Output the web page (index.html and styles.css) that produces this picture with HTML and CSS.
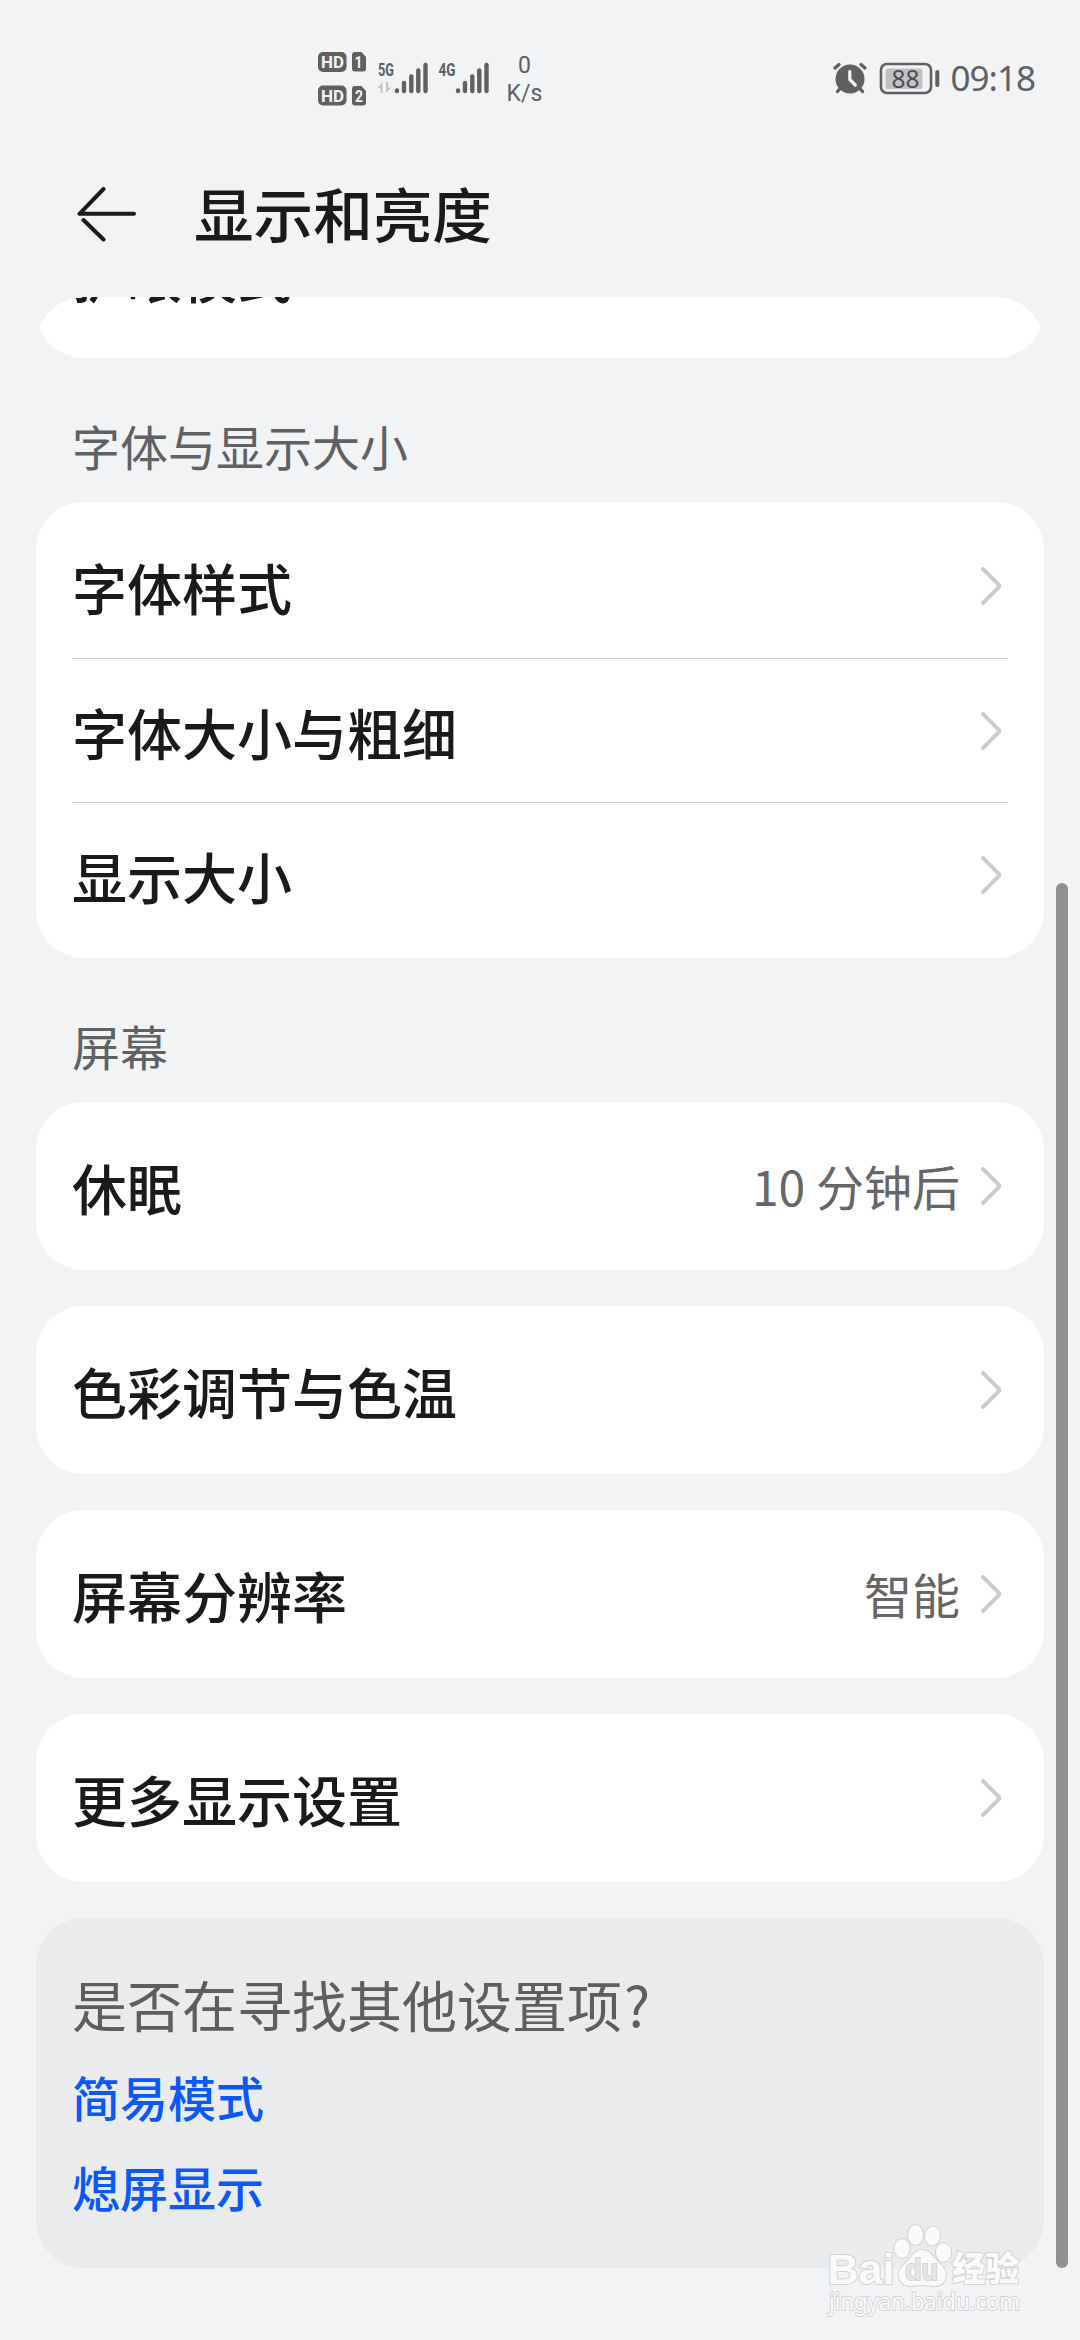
FILE: index.html
```html
<!DOCTYPE html>
<html lang="zh-CN">
<head>
  <meta charset="UTF-8">
  <meta name="viewport" content="width=device-width, initial-scale=1.0">
  <title>显示和亮度</title>
  <link rel="stylesheet" href="styles.css">
</head>
<body>
  <svg class="defs" width="0" height="0">
    <symbol id="arrow" viewBox="0 0 20 38">
      <path d="M2 2L17 17Q19 19 17 21L2 36" fill="none" stroke="#ccc" stroke-width="4" stroke-linecap="round"/>
    </symbol>
  </svg>

  <!-- Строка состояния -->
  <div class="status-bar">
    <svg class="sim-info" width="230" height="60" viewBox="315 48 230 60">
      <g class="badge">
        <rect x="318" y="52" width="28.5" height="20" rx="5"/>
        <rect x="318" y="85.500" width="28.500" height="20" rx="5"/>
        <path d="M355 52h6.500l4.500 5v11.500q0 3-3 3h-8q-3 0-3-3v-13.500q0-3 3-3z"/>
        <path d="M355 86h6.500l4.500 5v11.500q0 3-3 3h-8q-3 0-3-3v-13.500q0-3 3-3z"/>
      </g>
      <g class="badge-text">
        <text x="321" y="68" textLength="23" lengthAdjust="spacingAndGlyphs">HD</text>
        <text x="321" y="101.500" textLength="23" lengthAdjust="spacingAndGlyphs">HD</text>
        <text x="354.500" y="68" textLength="8" lengthAdjust="spacingAndGlyphs">1</text>
        <text x="355" y="102" textLength="8" lengthAdjust="spacingAndGlyphs">2</text>
      </g>
      <g class="net-text">
        <text x="378" y="76" textLength="16" lengthAdjust="spacingAndGlyphs">5G</text>
        <text x="438.500" y="76" textLength="17" lengthAdjust="spacingAndGlyphs">4G</text>
      </g>
      <path d="M382.500 93V82l-5 6h3v5zM386 82v11l5.500-5.500h-3.500V82z" fill="#c4c5c7"/>
      <g class="bars">
        <path d="M397 91v-.5M404 91v-8M411.300 91V76.500M418.300 91V70.500M425.500 91V65"/>
        <path d="M458 91v-.5M465 91v-8M472.300 91V76.500M479.300 91V70.500M486.500 91V65"/>
      </g>
      <g class="speed">
        <text x="524.500" y="73">0</text>
        <text x="524.500" y="100.500">K/s</text>
      </g>
    </svg>
    <div class="status-right">
      <svg width="36" height="34" viewBox="833 61 36 34">
        <circle cx="851" cy="79" r="14.500" fill="#5f6062"/>
        <path d="M850.800 71.500v8l5.500 5.500" fill="none" stroke="#f1f3f5" stroke-width="3.200" stroke-linecap="round"/>
        <path d="M836 68l4-3.500M866 68l-4-3.500M842 87.500l-3.500 4M860 87.500l3.500 4" stroke="#5f6062" stroke-width="3.400" stroke-linecap="round"/>
      </svg>
      <svg width="62" height="34" viewBox="879 61 62 34">
        <rect x="881" y="64" width="50" height="29" rx="6" fill="none" stroke="#5f6062" stroke-width="2.600"/>
        <rect x="885.500" y="68.500" width="37" height="20.500" rx="2.500" fill="#c0c1c3"/>
        <rect x="935.300" y="70" width="4" height="17" rx="2" fill="#5f6062"/>
        <text class="battery-text" x="891.500" y="87.500" textLength="28" lengthAdjust="spacingAndGlyphs">88</text>
      </svg>
      <span class="time">09:18</span>
    </div>
  </div>

  <!-- Заголовок -->
  <div class="header">
    <svg class="back" width="60" height="56" viewBox="0 0 60 56">
      <path d="M26.500 2L2.500 26.800H57M6.500 33L26.500 52.500" fill="none" stroke="#1a1a1a" stroke-width="4" stroke-linecap="round" stroke-linejoin="round"/>
    </svg>
    <h1>显示和亮度</h1>
  </div>

  <div class="content">
    <!-- Карточка, прокрученная под заголовок -->
    <div class="card-clip">
      <div class="card">
        <div class="row"><span class="name">护眼模式</span></div>
      </div>
    </div>

    <h2>字体与显示大小</h2>
    <div class="card">
      <div class="row"><span class="name">字体样式</span><svg class="arrow"><use href="#arrow"/></svg></div>
      <div class="row"><span class="name">字体大小与粗细</span><svg class="arrow"><use href="#arrow"/></svg></div>
      <div class="row"><span class="name">显示大小</span><svg class="arrow"><use href="#arrow"/></svg></div>
    </div>

    <h2>屏幕</h2>
    <div class="card">
      <div class="row"><span class="name">休眠</span><span class="value">10 分钟后</span><svg class="arrow"><use href="#arrow"/></svg></div>
    </div>
    <div class="card">
      <div class="row"><span class="name">色彩调节与色温</span><svg class="arrow"><use href="#arrow"/></svg></div>
    </div>
    <div class="card">
      <div class="row"><span class="name">屏幕分辨率</span><span class="value">智能</span><svg class="arrow"><use href="#arrow"/></svg></div>
    </div>
    <div class="card">
      <div class="row"><span class="name">更多显示设置</span><svg class="arrow"><use href="#arrow"/></svg></div>
    </div>

    <div class="search-more">
      <p>是否在寻找其他设置项<span class="mark-q">?</span></p>
      <a>简易模式</a>
      <a>熄屏显示</a>
    </div>
  </div>

  <div class="scrollbar"></div>

  <svg class="watermark" width="210" height="110" viewBox="820 2220 210 110">
    <g class="mark">
      <text class="mark-logo" x="827.500" y="2284" textLength="67" lengthAdjust="spacingAndGlyphs">Bai</text>
      <ellipse cx="902" cy="2248.500" rx="7.500" ry="9.500"/>
      <ellipse cx="915.500" cy="2235" rx="7.500" ry="10"/>
      <ellipse cx="932.500" cy="2236" rx="7.500" ry="9.500" transform="rotate(12 932.500 2236)"/>
      <ellipse cx="943.500" cy="2252.500" rx="7.500" ry="9.500"/>
      <path d="M922 2250c-7 0-10 6-14 11-5 5-10 8-9 15 1 8 7 10 12 10 4 0 7-1 11-1s8 1 12 1c6 0 11-3 12-10 1-6-4-10-9-15-4-5-8-11-15-11z"/>
      <text class="mark-du" x="905" y="2280" textLength="33" lengthAdjust="spacingAndGlyphs">du</text>
      <text class="mark-cn" x="952" y="2281" textLength="67" lengthAdjust="spacingAndGlyphs">经验</text>
      <text class="mark-url" x="829" y="2310" textLength="191" lengthAdjust="spacingAndGlyphs">jingyan.baidu.com</text>
    </g>
  </svg>
</body>
</html>
```
FILE: styles.css
```css
/* Основные стили */
* {
  box-sizing: border-box;
}

body {
  position: relative;
  margin: 0;
  width: 1080px;
  height: 2340px;
  overflow: hidden;
  background: #f1f3f5;
  color: #1a1a1a;
  font-family: "Noto Sans CJK SC", sans-serif;
}

.defs {
  position: absolute;
}

h1, h2, p {
  margin: 0;
}

/* Строка состояния */
.status-bar {
  display: flex;
  justify-content: space-between;
  align-items: flex-start;
  height: 132px;
  padding: 48px 45px 0 315px;
}

.badge {
  fill: #5f6062;
}

.badge-text {
  fill: #f1f3f5;
  font: bold 17px Roboto, sans-serif;
}

.net-text {
  fill: #5f6062;
  font: bold 18px Roboto, sans-serif;
}

.bars {
  fill: none;
  stroke: #5f6062;
  stroke-width: 4.4px;
  stroke-linecap: round;
}

.speed {
  fill: #5f6062;
  font: 23px Roboto, sans-serif;
  text-anchor: middle;
}

.status-right {
  display: flex;
  align-items: center;
  height: 34px;
  margin-top: 13px;
}

.status-right svg + svg {
  margin-left: 11px;
}

.battery-text {
  fill: #4c4d4f;
  font: 26px "Noto Sans", sans-serif;
}

.time {
  margin-left: 10px;
  color: #5f6062;
  font: 35px/34px "Noto Sans", sans-serif;
  letter-spacing: -1px;
  white-space: nowrap;
}

/* Заголовок */
.header {
  display: flex;
  align-items: center;
  height: 165px;
  padding-left: 77px;
}

h1 {
  margin: 0 0 5px 57px;
  font-size: 59.6px;
  font-weight: 500;
  line-height: 80px;
}

/* Список */
.content {
  padding: 0 36px;
}

.card-clip {
  display: flex;
  flex-direction: column;
  justify-content: flex-end;
  height: 61px;
  border-radius: 48px 48px 0 0;
  overflow: hidden;
}

h2 {
  height: 144px;
  padding: 51px 36px 0;
  color: #606163;
  font-size: 48px;
  font-weight: 400;
  line-height: 72px;
}

.card {
  padding: 12px 36px;
  border-radius: 48px;
  background: #fff;
}

.card + .card {
  margin-top: 36px;
}

.row {
  display: flex;
  align-items: center;
  height: 144px;
}

.row + .row {
  border-top: 1px solid #ccc;
}

.name {
  flex: 1;
  font-size: 55px;
  font-weight: 500;
  line-height: 80px;
}

.value {
  margin-bottom: 3px;
  color: #666;
  font-size: 48px;
  line-height: 72px;
}

.arrow {
  width: 20px;
  height: 38px;
  margin: 0 7px 0 21px;
}

/* Подсказки внизу */
.search-more {
  display: flex;
  flex-direction: column;
  height: 350px;
  margin-top: 36px;
  padding: 45px 36px 0;
  border-radius: 48px;
  background: #e9ebec;
}

.search-more p {
  margin-bottom: 4px;
  color: #5d5e5f;
  font-size: 55px;
  line-height: 80px;
}

.mark-q {
  margin-left: 2px;
}

.search-more a {
  margin-top: 9px;
  color: #0a59f7;
  font-size: 48px;
  font-weight: 500;
  line-height: 81px;
}

.scrollbar {
  position: absolute;
  top: 883px;
  right: 12px;
  width: 12px;
  height: 1385px;
  border-radius: 6px;
  background: #909193;
}

/* Водяной знак */
.watermark {
  position: absolute;
  left: 820px;
  top: 2220px;
}

.mark {
  fill: #fafafa;
  stroke: #d2d4d5;
  stroke-width: 2px;
  paint-order: stroke;
}

.mark-logo {
  font: bold 42px "Liberation Sans", sans-serif;
}

.mark-du {
  fill: #e4e5e6;
  font: bold 30px "Liberation Sans", sans-serif;
}

.mark-cn {
  font: 900 34px "Noto Sans CJK SC", sans-serif;
}

.mark-url {
  font: 24px "Noto Sans", sans-serif;
}
```
